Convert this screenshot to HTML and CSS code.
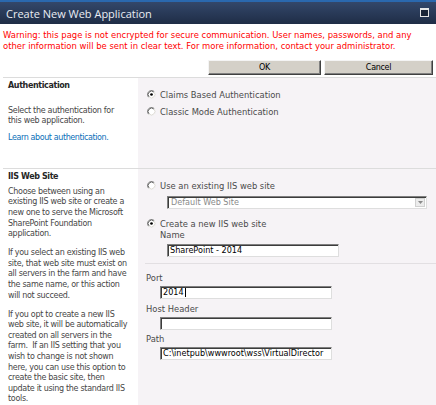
FILE: index.html
```html
<!DOCTYPE html>
<html>
<head>
<meta charset="utf-8">
<title>Create New Web Application</title>
<link rel="stylesheet" href="styles.css">
</head>
<body>
<div class="window">
  <div class="titlebar">
    <span class="title">Create New Web Application</span>
    <span class="maximize"></span>
  </div>
  <div class="warning">Warning: this page is not encrypted for secure communication. User names, passwords, and any<br>other information will be sent in clear text. For more information, contact your administrator.</div>
  <div class="actions">
    <button class="btn btn-ok">OK</button>
    <button class="btn btn-cancel">Cancel</button>
  </div>

  <section class="section section-auth">
    <div class="desc">
      <h2 class="heading heading-auth">Authentication</h2>
      <p class="para para-auth">Select the authentication for<br>this web application.</p>
      <a class="link">Learn about authentication.</a>
    </div>
    <div class="panel panel-auth">
      <div class="radio-row">
        <svg class="radio" width="9" height="9" viewBox="0 0 12 12"><circle cx="6" cy="6" r="5.5" fill="#fff"/><path d="M9.9 2.1 A5.5 5.5 0 0 0 2.1 9.9" fill="none" stroke="#8a8a8a" stroke-width="1"/><path d="M9.2 2.8 A4.5 4.5 0 0 0 2.8 9.2" fill="none" stroke="#303030" stroke-width="1"/><path d="M2.1 9.9 A5.5 5.5 0 0 0 9.9 2.1" fill="none" stroke="#f0f0f0" stroke-width="1"/><path d="M2.8 9.2 A4.5 4.5 0 0 0 9.2 2.8" fill="none" stroke="#d4d0c8" stroke-width="1"/><circle cx="6" cy="6" r="1.8" fill="#000"/></svg>
        <span>Claims Based Authentication</span>
      </div>
      <div class="radio-row radio-row-next">
        <svg class="radio" width="9" height="9" viewBox="0 0 12 12"><circle cx="6" cy="6" r="5.5" fill="#fff"/><path d="M9.9 2.1 A5.5 5.5 0 0 0 2.1 9.9" fill="none" stroke="#8a8a8a" stroke-width="1"/><path d="M9.2 2.8 A4.5 4.5 0 0 0 2.8 9.2" fill="none" stroke="#303030" stroke-width="1"/><path d="M2.1 9.9 A5.5 5.5 0 0 0 9.9 2.1" fill="none" stroke="#f0f0f0" stroke-width="1"/><path d="M2.8 9.2 A4.5 4.5 0 0 0 9.2 2.8" fill="none" stroke="#d4d0c8" stroke-width="1"/></svg>
        <span>Classic Mode Authentication</span>
      </div>
    </div>
  </section>

  <section class="section section-iis">
    <div class="desc">
      <h2 class="heading heading-iis">IIS Web Site</h2>
      <p class="para">Choose between using an<br>existing IIS web site or create a<br>new one to serve the Microsoft<br>SharePoint Foundation<br>application.</p>
      <p class="para para-gap">If you select an existing IIS web<br>site, that web site must exist on<br>all servers in the farm and have<br>the same name, or this action<br>will not succeed.</p>
      <p class="para para-gap">If you opt to create a new IIS<br>web site, it will be automatically<br>created on all servers in the<br>farm.&nbsp; If an IIS setting that you<br>wish to change is not shown<br>here, you can use this option to<br>create the basic site, then<br>update it using the standard IIS<br>tools.</p>
    </div>
    <div class="panel panel-iis">
      <div class="radio-row">
        <svg class="radio" width="9" height="9" viewBox="0 0 12 12"><circle cx="6" cy="6" r="5.5" fill="#fff"/><path d="M9.9 2.1 A5.5 5.5 0 0 0 2.1 9.9" fill="none" stroke="#8a8a8a" stroke-width="1"/><path d="M9.2 2.8 A4.5 4.5 0 0 0 2.8 9.2" fill="none" stroke="#303030" stroke-width="1"/><path d="M2.1 9.9 A5.5 5.5 0 0 0 9.9 2.1" fill="none" stroke="#f0f0f0" stroke-width="1"/><path d="M2.8 9.2 A4.5 4.5 0 0 0 9.2 2.8" fill="none" stroke="#d4d0c8" stroke-width="1"/></svg>
        <span>Use an existing IIS web site</span>
      </div>
      <div class="select">
        <span class="select-text">Default Web Site</span>
        <span class="select-arrow"><svg width="5" height="3" viewBox="0 0 5 3"><path d="M0 0 H5 L2.5 3 Z" fill="#8a8a8a"/></svg></span>
      </div>
      <div class="radio-row radio-row-create">
        <svg class="radio" width="9" height="9" viewBox="0 0 12 12"><circle cx="6" cy="6" r="5.5" fill="#fff"/><path d="M9.9 2.1 A5.5 5.5 0 0 0 2.1 9.9" fill="none" stroke="#8a8a8a" stroke-width="1"/><path d="M9.2 2.8 A4.5 4.5 0 0 0 2.8 9.2" fill="none" stroke="#303030" stroke-width="1"/><path d="M2.1 9.9 A5.5 5.5 0 0 0 9.9 2.1" fill="none" stroke="#f0f0f0" stroke-width="1"/><path d="M2.8 9.2 A4.5 4.5 0 0 0 9.2 2.8" fill="none" stroke="#d4d0c8" stroke-width="1"/><circle cx="6" cy="6" r="1.8" fill="#000"/></svg>
        <span>Create a new IIS web site</span>
      </div>
      <div class="field-label label-name">Name</div>
      <div class="textbox textbox-name">SharePoint - 2014</div>
      <div class="rule"></div>
      <div class="field-label label-port">Port</div>
      <div class="textbox">2014<span class="caret"></span></div>
      <div class="field-label label-next">Host Header</div>
      <div class="textbox"></div>
      <div class="field-label label-next">Path</div>
      <div class="textbox">C:\inetpub\wwwroot\wss\VirtualDirector</div>
    </div>
  </section>
</div>
</body>
</html>
```

FILE: styles.css
```css
html, body {
  margin: 0;
  padding: 0;
  background: #fff;
}

.window {
  width: 436px;
  height: 405px;
  overflow: hidden;
  display: flex;
  flex-direction: column;
}

.titlebar {
  height: 24px;
  flex: none;
  box-sizing: border-box;
  border-top: 2px solid #2a68ae;
  background: linear-gradient(#33476a, #1f2d46);
  display: flex;
  align-items: center;
  justify-content: space-between;
  padding: 0 7px 0 6px;
}

.title {
  font-family: "Open Sans", "Liberation Sans", sans-serif;
  font-size: 11px;
  color: #e9edf3;
}

.maximize {
  width: 9px;
  height: 9px;
  box-sizing: border-box;
  border: 1px solid #e6e6e6;
  border-top-width: 2px;
  background: #1a2538;
  margin-top: -2px;
}

.warning {
  margin: 5.5px 0 0 3px;
  font-family: "DejaVu Sans", sans-serif;
  font-size: 8.45px;
  line-height: 11px;
  color: #ff0000;
  white-space: nowrap;
}

.actions {
  display: flex;
  justify-content: flex-end;
  gap: 3px;
  margin-top: 8px;
  padding-right: 3px;
}

.btn {
  height: 15px;
  padding: 0;
  margin: 0;
  box-sizing: border-box;
  background: #d4d0c8;
  border: 1px solid;
  border-color: #f4f4f4 #404040 #404040 #f4f4f4;
  box-shadow: inset -1px -1px 0 #808080;
  font-family: "DejaVu Sans", sans-serif;
  font-size: 8px;
  letter-spacing: -0.3px;
  color: #000;
  line-height: 11px;
}

.btn-ok { width: 113px; }
.btn-cancel { width: 109px; }

.section {
  display: grid;
  grid-template-columns: 135px 1fr;
  margin-left: 3px;
  border-top: 1px solid #dcdcdc;
}

.section-auth {
  margin-top: 2px;
  height: 92px;
  box-sizing: border-box;
}

.section-iis {
  flex: 1;
}

.desc {
  padding-left: 5px;
  font-family: "DejaVu Sans", sans-serif;
  font-size: 8px;
  letter-spacing: -0.3px;
  color: #464646;
}

.heading {
  margin: 0;
  font-size: 8px;
  font-weight: bold;
  line-height: 11px;
  letter-spacing: -0.38px;
  color: #262626;
}

.heading-auth {
  margin-top: 2px;
  margin-bottom: 15px;
}

.heading-iis {
  margin-top: 2.5px;
  margin-bottom: 4.5px;
}

.para {
  margin: 0;
  line-height: 10.6px;
  white-space: nowrap;
}

.para-auth {
  line-height: 10.8px;
}

.para-gap {
  margin-top: 8.5px;
}

.link {
  display: block;
  margin-top: 5px;
  line-height: 11px;
  letter-spacing: -0.4px;
  color: #0b6fb8;
  cursor: pointer;
}

.panel {
  background: #f6f3f6;
  padding-left: 8px;
  display: flex;
  flex-direction: column;
  align-items: flex-start;
  font-family: "DejaVu Sans", sans-serif;
  font-size: 8.4px;
  color: #4a4a4a;
}

.panel-auth,
.panel-iis {
  padding-top: 12.5px;
}

.radio-row {
  display: flex;
  align-items: flex-start;
  gap: 4px;
  line-height: 11px;
  white-space: nowrap;
}

.radio {
  flex: none;
  margin-left: 1px;
}

.radio-row-next {
  margin-top: 5.5px;
}

.radio-row-create {
  margin-top: 10.5px;
}

.select {
  margin: 3.5px 0 0 21px;
  width: 260px;
  height: 13px;
  box-sizing: border-box;
  background: #fff;
  border: 1px solid;
  border-color: #7f7f7f #dedede #dedede #7f7f7f;
  box-shadow: inset 1px 1px 0 #3c3c3c;
  display: flex;
  align-items: center;
  justify-content: space-between;
  padding: 0 1px 0 3px;
}

.select-text {
  color: #8a8a8a;
  font-size: 8.1px;
  line-height: 11px;
}

.select-arrow {
  width: 10px;
  height: 9px;
  box-sizing: border-box;
  background: #ececec;
  border: 1px solid #d0d0d0;
  display: flex;
  align-items: center;
  justify-content: center;
}

.field-label {
  line-height: 11px;
  white-space: nowrap;
}

.label-name {
  margin-left: 14px;
}

.label-port {
  margin-top: 9.5px;
}

.label-next {
  margin-top: 4.5px;
}

.textbox {
  margin: 2px 0 0 14px;
  width: 172px;
  height: 13px;
  box-sizing: border-box;
  background: #fff;
  border: 1px solid;
  border-color: #7f7f7f #dedede #dedede #7f7f7f;
  box-shadow: inset 1px 1px 0 #3c3c3c;
  padding-left: 2px;
  font-family: "DejaVu Sans", sans-serif;
  font-size: 8.1px;
  line-height: 11px;
  color: #000;
  white-space: nowrap;
  overflow: hidden;
  display: flex;
  align-items: center;
}

.textbox-name {
  margin-top: 2.5px;
  margin-left: 21px;
}

.caret {
  display: inline-block;
  width: 1px;
  height: 9px;
  background: #000;
  margin-left: 1px;
}

.rule {
  align-self: stretch;
  margin: 6px 0 0 -1px;
  height: 1px;
  background: #e2dfe2;
}
```
